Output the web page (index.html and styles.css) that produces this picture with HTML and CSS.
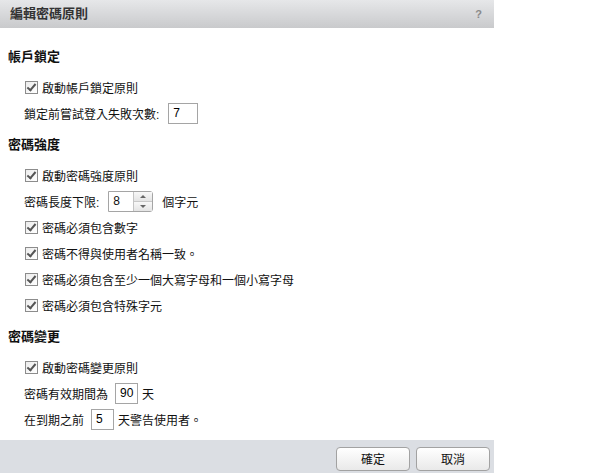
FILE: index.html
```html
<!DOCTYPE html>
<html lang="zh-Hant">
<head>
  <meta charset="UTF-8">
  <title>編輯密碼原則</title>
  <link rel="stylesheet" href="styles.css">
</head>
<body>
  <div class="dialog">
    <div class="header">
      <h1>編輯密碼原則</h1>
      <span class="help">?</span>
    </div>

    <div class="content">
      <div class="section first">
        <h2>帳戶鎖定</h2>
        <div class="row"><span class="check"></span>啟動帳戶鎖定原則</div>
        <div class="row">
          鎖定前嘗試登入失敗次數:
          <span class="field field-lock">7</span>
        </div>
      </div>

      <div class="section">
        <h2>密碼強度</h2>
        <div class="row"><span class="check"></span>啟動密碼強度原則</div>
        <div class="row">
          密碼長度下限:
          <span class="spinner">
            <span class="spin-value">8</span>
            <span class="spin-buttons">
              <span class="spin-up"></span>
              <span class="spin-down"></span>
            </span>
          </span>
          <span class="after">個字元</span>
        </div>
        <div class="row"><span class="check"></span>密碼必須包含數字</div>
        <div class="row"><span class="check"></span>密碼不得與使用者名稱一致。</div>
        <div class="row"><span class="check"></span>密碼必須包含至少一個大寫字母和一個小寫字母</div>
        <div class="row"><span class="check"></span>密碼必須包含特殊字元</div>
      </div>

      <div class="section">
        <h2>密碼變更</h2>
        <div class="row"><span class="check"></span>啟動密碼變更原則</div>
        <div class="row">
          密碼有效期間為
          <span class="field field-days">90</span>
          <span class="after-short">天</span>
        </div>
        <div class="row">
          在到期之前
          <span class="field field-warn">5</span>
          <span class="after-short">天警告使用者。</span>
        </div>
      </div>
    </div>

    <div class="footer">
      <button class="btn">確定</button>
      <button class="btn">取消</button>
    </div>
  </div>
</body>
</html>
```

FILE: styles.css
```css
body {
  margin: 0;
  background: #fff;
  font-family: "Liberation Sans", "Noto Sans CJK TC", sans-serif;
  font-size: 12px;
  color: #111;
}

.dialog {
  width: 494px;
  height: 473px;
  display: flex;
  flex-direction: column;
  background: #fff;
}

.header {
  height: 28px;
  padding: 0 10px;
  display: flex;
  align-items: center;
  justify-content: space-between;
  background: linear-gradient(#e6e7e9, #c9cacc);
}

.header h1 {
  margin: 0;
  font-size: 13px;
  font-weight: bold;
  color: #333;
  line-height: 28px;
}

.help {
  font-size: 11px;
  font-weight: bold;
  color: #8a8a8a;
  margin-right: 2px;
}

.content {
  flex: 1;
  padding: 0 8px;
}

.section {
  margin-top: 9px;
}

.section.first {
  margin-top: 19px;
}

.section h2 {
  margin: 0 0 7px 0;
  font-size: 13px;
  font-weight: bold;
  line-height: 20px;
  color: #111;
}

.row {
  height: 26px;
  padding-left: 16px;
  display: flex;
  align-items: center;
  white-space: nowrap;
}

.check {
  width: 11px;
  height: 11px;
  margin: 0 4px 0 1px;
  border: 1px solid #8c8c8c;
  background: linear-gradient(135deg, #ececec, #fff);
  position: relative;
}

.check::after {
  content: "";
  position: absolute;
  left: 3px;
  top: 0px;
  width: 3px;
  height: 7px;
  border: solid #555;
  border-width: 0 2px 2px 0;
  transform: rotate(40deg);
}

.field {
  height: 19px;
  border: 1px solid #a5a5a5;
  display: flex;
  align-items: center;
  padding-left: 4px;
  box-sizing: content-box;
  color: #000;
}

.field-lock {
  width: 24px;
  margin-left: 9px;
}

.field-days {
  width: 17px;
  margin-left: 7px;
}

.field-warn {
  width: 17px;
  margin-left: 7px;
}

.after-short {
  margin-left: 4px;
}

.spinner {
  display: flex;
  height: 19px;
  margin-left: 9px;
  border: 1px solid #a5a5a5;
  border-radius: 0 3px 3px 0;
}

.spin-value {
  width: 20px;
  padding-left: 4px;
  display: flex;
  align-items: center;
  border-right: 1px solid #c4c4c4;
}

.spin-buttons {
  width: 18px;
  display: flex;
  flex-direction: column;
}

.spin-up,
.spin-down {
  flex: 1;
  position: relative;
  background: linear-gradient(#f8f8f8, #e4e4e4);
}

.spin-up {
  border-bottom: 1px solid #c8c8c8;
}

.spin-up::after,
.spin-down::after {
  content: "";
  position: absolute;
  left: 6px;
  top: 3px;
  border-left: 3px solid transparent;
  border-right: 3px solid transparent;
}

.spin-up::after {
  border-bottom: 3px solid #666;
}

.spin-down::after {
  border-top: 3px solid #666;
}

.after {
  margin-left: 9px;
}

.footer {
  height: 33px;
  display: flex;
  align-items: center;
  justify-content: flex-end;
  gap: 6px;
  padding-right: 4px;
  background: #dbdee3;
}

.btn {
  width: 74px;
  height: 24px;
  border: 1px solid #a2a2a2;
  border-radius: 4px;
  background: linear-gradient(#ffffff, #e9e9e9);
  font-family: "Liberation Sans", "Noto Sans CJK TC", sans-serif;
  font-size: 12px;
  color: #111;
  padding: 0;
  margin-top: 4px;
}
```
